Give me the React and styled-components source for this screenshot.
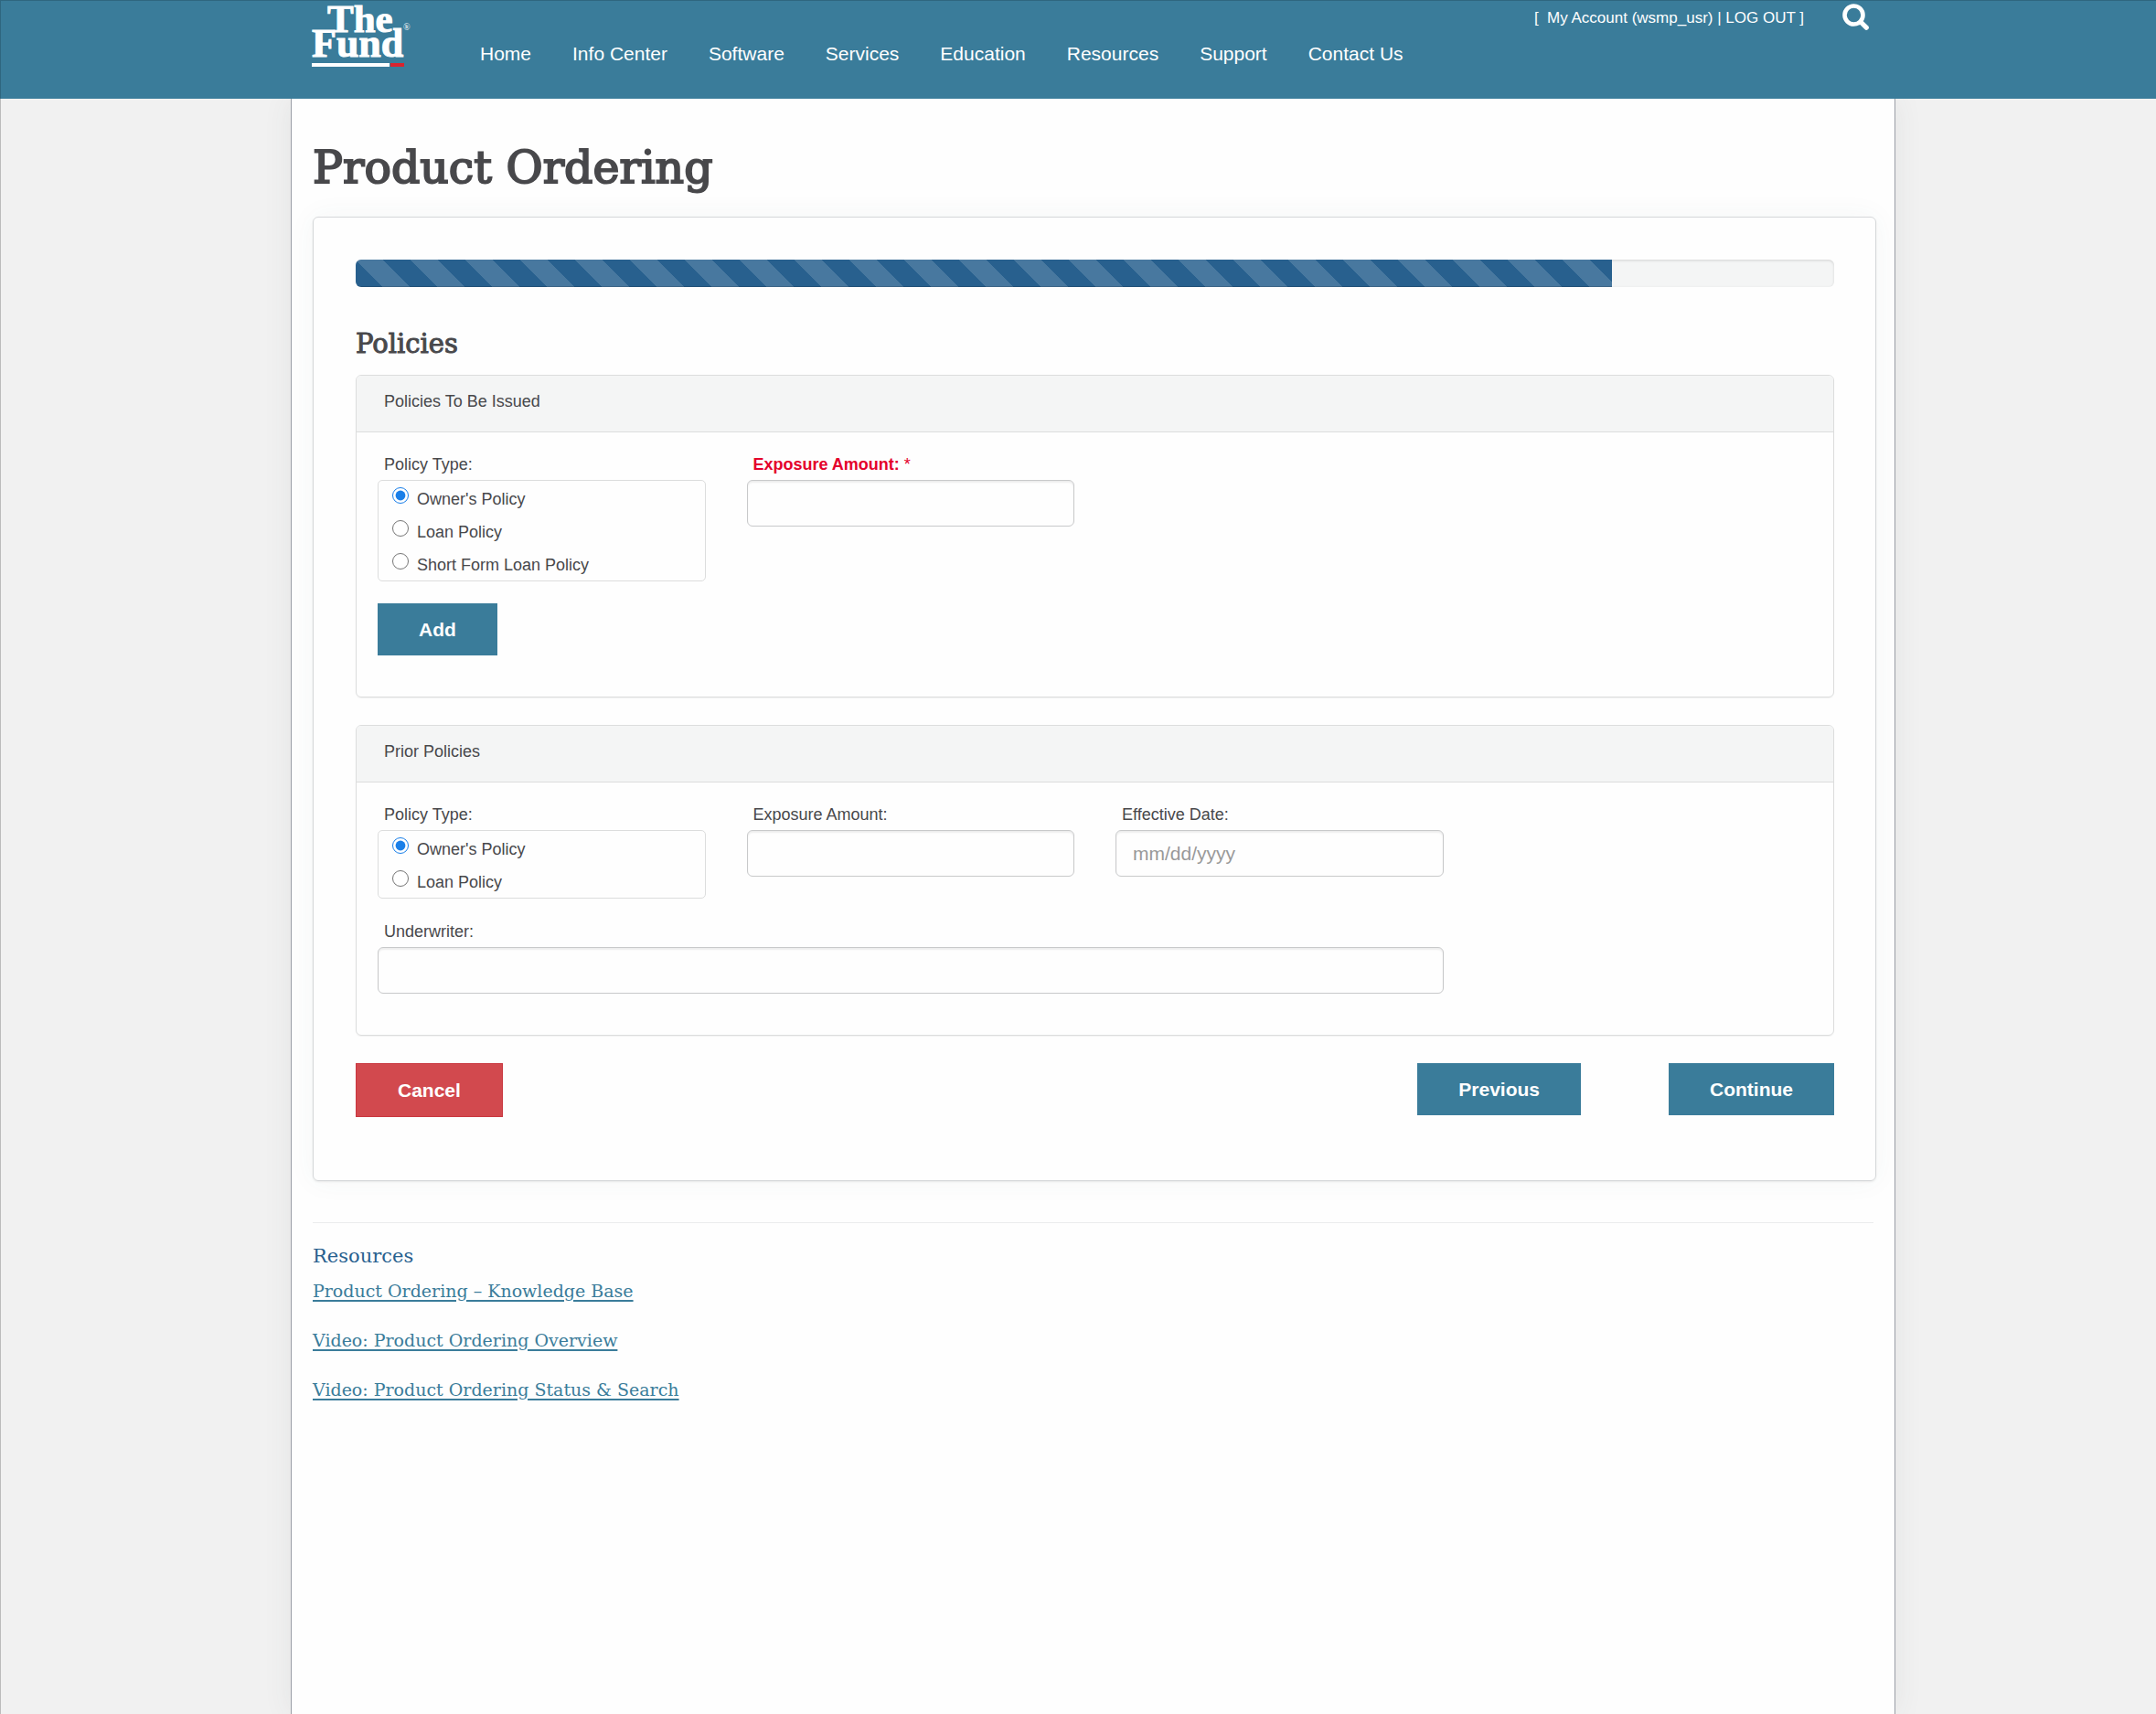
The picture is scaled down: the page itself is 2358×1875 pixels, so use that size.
import React, { useState } from "react";
import styled, { createGlobalStyle } from "styled-components";

const teal = "#3a7c9a";
const ink = "#48484b";
const sans = `"Liberation Sans", Arial, sans-serif`;
const slab = `"DejaVu Serif", serif`;

const GlobalStyle = createGlobalStyle`
  *, *::before, *::after { box-sizing: border-box; }
  body {
    margin: 0;
    background: #f1f1f1;
    color: ${ink};
    font-family: ${sans};
    font-size: 18px;
    line-height: 24px;
  }
`;

const Page = styled.div`
  display: flex;
  flex-direction: column;
  min-height: 100vh;
  border-left: 1px solid #bcbcbc;
`;

const Header = styled.header`
  display: flex;
  align-items: flex-start;
  height: 108px;
  margin-left: -1px;
  padding: 0 313px 0 340px;
  background: ${teal};
  border-top: 1px solid #2f667f;
  border-left: 1px solid #2f667f;
`;

const LogoLink = styled.a`
  display: block;
  flex: none;
  width: 112px;
  height: 76px;
  margin-right: 72px;
`;

const LogoArt = styled.svg`
  display: block;
  overflow: visible;
`;

const Nav = styled.nav`
  display: flex;
  gap: 45px;
  padding-top: 46px;
`;

const NavLink = styled.a`
  color: #fff;
  font-size: 21px;
  line-height: 24px;
  text-decoration: none;
  white-space: nowrap;
`;

const Account = styled.div`
  display: flex;
  align-items: flex-start;
  gap: 42px;
  margin-left: auto;
  color: #fff;
  font-size: 17px;
  line-height: 24px;
  white-space: pre;
`;

const AccountText = styled.div`
  padding-top: 7px;
`;

const AccountLink = styled.a`
  color: inherit;
  text-decoration: none;
`;

const SearchButton = styled.button`
  display: block;
  padding: 3px 0 0;
  border: 0;
  background: none;
  color: #fff;
  line-height: 0;
`;

const Content = styled.main`
  flex: 1;
  margin: 0 285px 0 317px;
  padding: 41px 23px;
  background: #fefefe;
  border: solid #9a9ea6;
  border-width: 0 1px;
  box-shadow: 0 0 30px rgba(60, 80, 80, 0.08);
  clip-path: inset(0 -60px);
`;

const PageTitle = styled.h1`
  margin: 0 0 18px;
  font: 400 49px/70px ${slab};
  -webkit-text-stroke: 2px currentColor;
`;

const Card = styled.section`
  margin-right: -3px;
  padding: 46px 45px 69px 46px;
  border: 1px solid #d6d8da;
  border-radius: 6px;
  box-shadow: 0 1px 2px rgba(0, 0, 0, 0.08), 0 0 30px rgba(60, 90, 100, 0.05);
`;

const Progress = styled.div`
  height: 30px;
  overflow: hidden;
  border-radius: 6px;
  background: #f4f5f5;
  box-shadow: inset 0 1px 3px rgba(0, 0, 0, 0.14);
`;

const ProgressFill = styled.div`
  height: 100%;
  background-color: #28608e;
  background-image: linear-gradient(
    45deg,
    rgba(255, 255, 255, 0.15) 25%,
    transparent 25%,
    transparent 50%,
    rgba(255, 255, 255, 0.15) 50%,
    rgba(255, 255, 255, 0.15) 75%,
    transparent 75%,
    transparent
  );
  background-size: 60px 60px;
  box-shadow: inset 0 -1px 0 rgba(0, 0, 0, 0.15);
`;

const SectionTitle = styled.h2`
  margin: 42px 0 14px;
  font: 400 29px/40px ${slab};
  -webkit-text-stroke: 1px currentColor;
`;

const Panel = styled.section`
  margin-bottom: 30px;
  border: 1px solid #dcdddd;
  border-radius: 6px;
  box-shadow: 0 1px 1px rgba(0, 0, 0, 0.05);
`;

const PanelTitle = styled.h3`
  margin: 0;
  padding: 16px 30px 21px;
  background: #f4f5f5;
  border-bottom: 1px solid #dcdddd;
  border-radius: 5px 5px 0 0;
  font-size: 18px;
  font-weight: 400;
  line-height: 24px;
`;

const PanelBody = styled.div`
  display: grid;
  grid-template-columns: repeat(4, minmax(0, 1fr));
  gap: 24px 45px;
  align-items: start;
  padding: 23px 23px 45px;
`;

const Field = styled.div`
  grid-column: span ${(p) => p.$span || 1};
`;

const FieldLabel = styled.label`
  display: block;
  margin-bottom: 5px;
  padding-left: 7px;
  color: ${(p) => (p.$required ? "#e4002b" : "inherit")};
  font-weight: ${(p) => (p.$required ? 700 : 400)};
`;

const Star = styled.span`
  font-weight: 400;
`;

const Input = styled.input`
  display: block;
  width: 100%;
  height: 51px;
  padding: 0 18px;
  border: 1px solid #c8c9ca;
  border-radius: 6px;
  background: #fefefe;
  box-shadow: inset 0 2px 2px rgba(0, 0, 0, 0.07);
  color: ${ink};
  font: 21px/30px ${sans};

  &::placeholder {
    color: #999;
    opacity: 1;
  }
`;

const RadioBox = styled.div`
  padding: 1px 15px 0;
  border: 1px solid #dcdddd;
  border-radius: 5px;
`;

const RadioRow = styled.label`
  display: flex;
  gap: 9px;
  height: 36px;
  line-height: 38px;
`;

const Radio = styled.input`
  flex: none;
  width: 18px;
  height: 18px;
  margin: 6px 0 0;
  accent-color: #1a7fe8;
`;

const Button = styled.button`
  padding: 17px 45px 16px;
  border: ${(p) => (p.$danger ? "1px solid #c9373f" : "0")};
  background: ${(p) => (p.$danger ? "#d2494e" : teal)};
  color: #fff;
  font: 700 21px/24px ${sans};
`;

const Actions = styled.div`
  display: flex;
  align-items: flex-start;
`;

const StepButtons = styled.div`
  display: flex;
  gap: 96px;
  margin-left: auto;
`;

const Divider = styled.hr`
  margin: 45px 0 21px;
  border: 0;
  border-top: 1px solid #ebeced;
`;

const ResourcesTitle = styled.h4`
  margin: 0;
  color: #28608e;
  font: 400 21px/30px ${slab};
`;

const ResourceList = styled.ul`
  display: grid;
  gap: 24px;
  margin: 8px 0 0;
  padding: 0;
  list-style: none;
  font: 400 19px/30px ${slab};
`;

const ResourceLink = styled.a`
  color: ${teal};
  text-decoration-thickness: 2px;
  text-underline-offset: 3px;
`;

const navItems = [
  "Home",
  "Info Center",
  "Software",
  "Services",
  "Education",
  "Resources",
  "Support",
  "Contact Us",
];

const resources = [
  "Product Ordering – Knowledge Base",
  "Video: Product Ordering Overview",
  "Video: Product Ordering Status & Search",
];

function Logo() {
  return (
    <LogoArt width="112" height="76" viewBox="0 0 112 76" role="img" aria-label="The Fund">
      <g fill="#fff" stroke="#fff" fontFamily="Liberation Serif, serif" fontWeight="700">
        <text x="17" y="34" fontSize="43" strokeWidth="1">The</text>
        <text x="0" y="61" fontSize="44" strokeWidth="1">Fund</text>
        <text x="100" y="32" fontSize="10" fontWeight="400" strokeWidth="0">®</text>
      </g>
      <rect x="0" y="68" width="85" height="4" fill="#fff" />
      <rect x="86" y="68" width="15" height="4" fill="#d9232e" />
    </LogoArt>
  );
}

function SearchIcon() {
  return (
    <svg width="30" height="30" viewBox="0 0 30 30" fill="none" stroke="currentColor" aria-hidden="true">
      <circle cx="12.5" cy="12.5" r="10" strokeWidth="4.6" />
      <path d="M20 20l6.2 6.2" strokeWidth="5.2" strokeLinecap="round" />
    </svg>
  );
}

function PolicyTypes({ name, options }) {
  const [value, setValue] = useState(options[0]);
  return (
    <Field role="radiogroup" aria-labelledby={`${name}-label`}>
      <FieldLabel as="div" id={`${name}-label`}>Policy Type:</FieldLabel>
      <RadioBox>
        {options.map((option) => (
          <RadioRow key={option}>
            <Radio
              type="radio"
              name={name}
              checked={value === option}
              onChange={() => setValue(option)}
            />
            {option}
          </RadioRow>
        ))}
      </RadioBox>
    </Field>
  );
}

function TextField({ id, label, required, span, placeholder }) {
  return (
    <Field $span={span}>
      <FieldLabel htmlFor={id} $required={required}>
        {label}
        {required && <Star> *</Star>}
      </FieldLabel>
      <Input id={id} type="text" placeholder={placeholder} required={required} />
    </Field>
  );
}

export default function App() {
  return (
    <>
      <GlobalStyle />
      <Page>
        <Header>
          <LogoLink href="#">
            <Logo />
          </LogoLink>
          <Nav>
            {navItems.map((item) => (
              <NavLink href="#" key={item}>{item}</NavLink>
            ))}
          </Nav>
          <Account>
            <AccountText>
              {"[  "}
              <AccountLink href="#">My Account (wsmp_usr)</AccountLink>
              {" | "}
              <AccountLink href="#">LOG OUT</AccountLink>
              {" ]"}
            </AccountText>
            <SearchButton type="button" aria-label="Search">
              <SearchIcon />
            </SearchButton>
          </Account>
        </Header>
        <Content>
          <PageTitle>Product Ordering</PageTitle>
          <Card>
            <Progress role="progressbar" aria-valuenow={85} aria-valuemin={0} aria-valuemax={100}>
              <ProgressFill style={{ width: "85%" }} />
            </Progress>
            <SectionTitle>Policies</SectionTitle>
            <Panel>
              <PanelTitle>Policies To Be Issued</PanelTitle>
              <PanelBody>
                <PolicyTypes
                  name="issued"
                  options={["Owner's Policy", "Loan Policy", "Short Form Loan Policy"]}
                />
                <TextField id="issued-amount" label="Exposure Amount:" required />
                <Field $span={4}>
                  <Button type="button">Add</Button>
                </Field>
              </PanelBody>
            </Panel>
            <Panel>
              <PanelTitle>Prior Policies</PanelTitle>
              <PanelBody>
                <PolicyTypes name="prior" options={["Owner's Policy", "Loan Policy"]} />
                <TextField id="prior-amount" label="Exposure Amount:" />
                <TextField id="prior-date" label="Effective Date:" placeholder="mm/dd/yyyy" />
                <TextField id="underwriter" label="Underwriter:" span={3} />
              </PanelBody>
            </Panel>
            <Actions>
              <Button type="button" $danger>Cancel</Button>
              <StepButtons>
                <Button type="button">Previous</Button>
                <Button type="button">Continue</Button>
              </StepButtons>
            </Actions>
          </Card>
          <Divider />
          <ResourcesTitle>Resources</ResourcesTitle>
          <ResourceList>
            {resources.map((item) => (
              <li key={item}>
                <ResourceLink href="#">{item}</ResourceLink>
              </li>
            ))}
          </ResourceList>
        </Content>
      </Page>
    </>
  );
}
